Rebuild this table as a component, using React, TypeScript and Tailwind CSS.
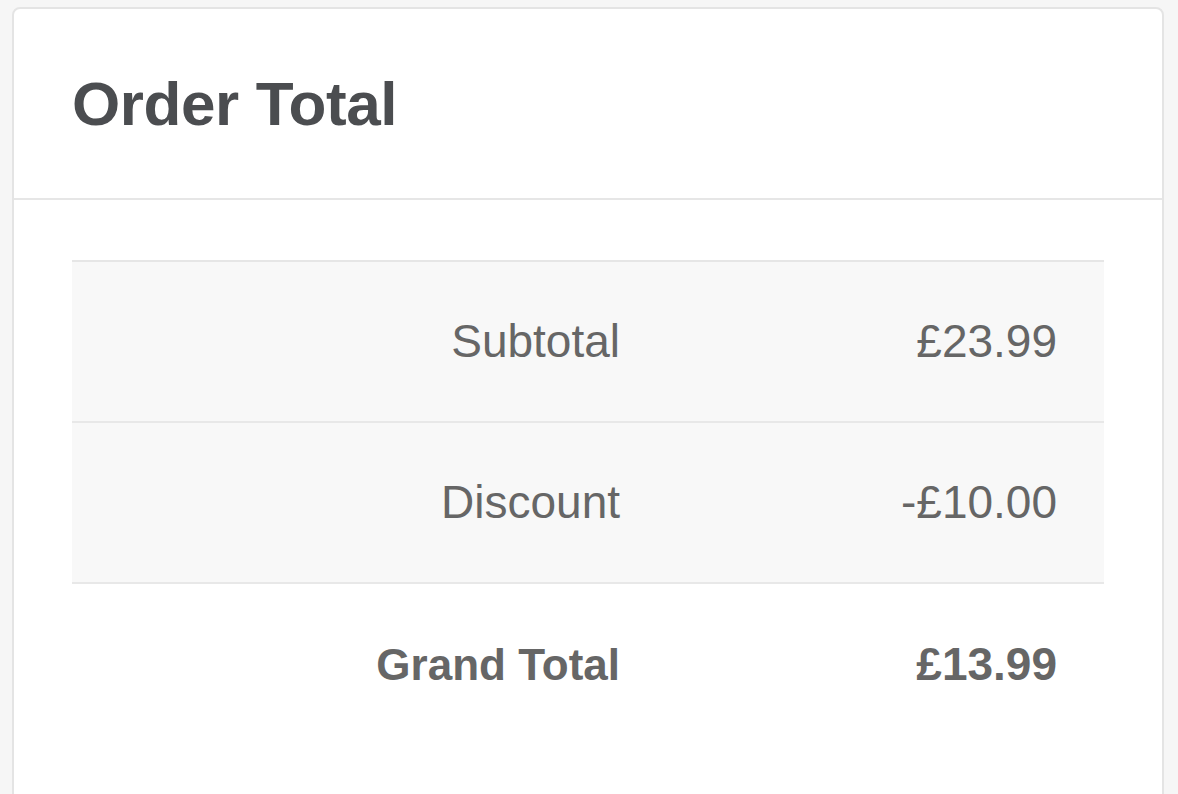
const rows = [
  { label: "Subtotal", value: "£23.99", shaded: true, strong: false },
  { label: "Discount", value: "-£10.00", shaded: true, strong: false },
  { label: "Grand Total", value: "£13.99", shaded: false, strong: true },
]

export default function App() {
  return (
    <div className="min-h-screen bg-[#f6f6f6] pt-[7px] pl-[12px] pr-[14px] font-['Liberation_Sans',Arial,sans-serif]">
      <div className="rounded-[8px] border-2 border-[#e4e4e4] bg-white pb-[80px]">
        {/* Header */}
        <div className="flex h-[191px] items-center border-b-2 border-[#e6e6e6] px-[58px]">
          <h2 className="text-[62px] font-bold leading-none tracking-[-0.4px] text-[#4b4d50]">Order Total</h2>
        </div>

        {/* Totals table */}
        <div className="px-[58px] pt-[60px]">
          <div className="border-t-2 border-[#e6e6e6]">
            {rows.map((row, i) => (
              <div
                key={row.label}
                className={`grid h-[161px] grid-cols-[548px_1fr] items-center text-[46px] text-[#666666] ${
                  i < rows.length - 1 ? "border-b-2 border-[#e8e8e8]" : ""
                } ${row.shaded ? "bg-[#f8f8f8]" : "bg-white"} ${row.strong ? "font-bold text-[#5c5c5c]" : ""}`}
              >
                <div className={`text-right ${row.strong ? "text-[44px]" : ""}`}>{row.label}</div>
                <div className="pr-[47px] text-right">{row.value}</div>
              </div>
            ))}
          </div>
        </div>
      </div>
    </div>
  )
}
